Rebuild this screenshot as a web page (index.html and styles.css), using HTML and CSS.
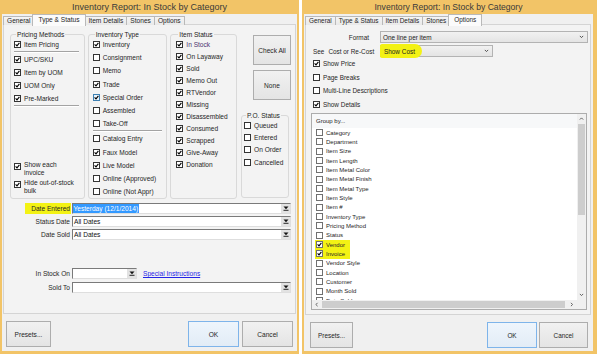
FILE: index.html
```html
<!DOCTYPE html>
<html lang="en">
<head>
<meta charset="utf-8">
<title>Inventory Report</title>
<link rel="stylesheet" href="styles.css">
</head>
<body>
<div class="screen">
  <section class="win win-left">
    <div class="titlebar">Inventory Report: In Stock by Category</div>
    <div class="client">
      <div class="tabs">
        <div class="tab">General</div>
        <div class="tab sel">Type &amp; Status</div>
        <div class="tab">Item Details</div>
        <div class="tab">Stones</div>
        <div class="tab">Options</div>
      </div>
      <div class="panel panel-left">
        <div class="groups">
          <fieldset class="grp grp-pricing">
            <legend>Pricing Methods</legend>
            <div class="grp-body pricing-body">
              <div class="chk"><span class="cb"><svg viewBox="0 0 5 5"><path d="M.6 2.4 2 3.9 4.4.8"/></svg></span>Item Pricing</div>
              <div class="sep"></div>
              <div class="chk"><span class="cb"><svg viewBox="0 0 5 5"><path d="M.6 2.4 2 3.9 4.4.8"/></svg></span>UPC/SKU</div>
              <div class="chk"><span class="cb"><svg viewBox="0 0 5 5"><path d="M.6 2.4 2 3.9 4.4.8"/></svg></span>Item by UOM</div>
              <div class="chk"><span class="cb"><svg viewBox="0 0 5 5"><path d="M.6 2.4 2 3.9 4.4.8"/></svg></span>UOM Only</div>
              <div class="chk"><span class="cb"><svg viewBox="0 0 5 5"><path d="M.6 2.4 2 3.9 4.4.8"/></svg></span>Pre-Marked</div>
              <div class="sep"></div>
              <div class="chk multi push"><span class="cb"><svg viewBox="0 0 5 5"><path d="M.6 2.4 2 3.9 4.4.8"/></svg></span><span>Show each<br>invoice</span></div>
              <div class="chk multi"><span class="cb"><svg viewBox="0 0 5 5"><path d="M.6 2.4 2 3.9 4.4.8"/></svg></span><span>Hide out-of-stock<br>bulk</span></div>
            </div>
          </fieldset>
          <fieldset class="grp grp-inv">
            <legend>Inventory Type</legend>
            <div class="grp-body">
              <div class="chk"><span class="cb"><svg viewBox="0 0 5 5"><path d="M.6 2.4 2 3.9 4.4.8"/></svg></span>Inventory</div>
              <div class="chk"><span class="cb"></span>Consignment</div>
              <div class="chk"><span class="cb"></span>Memo</div>
              <div class="chk"><span class="cb"><svg viewBox="0 0 5 5"><path d="M.6 2.4 2 3.9 4.4.8"/></svg></span>Trade</div>
              <div class="chk"><span class="cb hover"><svg viewBox="0 0 5 5"><path d="M.6 2.4 2 3.9 4.4.8"/></svg></span>Special Order</div>
              <div class="chk"><span class="cb"></span>Assembled</div>
              <div class="chk"><span class="cb"></span>Take-Off</div>
              <div class="sep sep-inv"></div>
              <div class="chk"><span class="cb"></span>Catalog Entry</div>
              <div class="chk"><span class="cb"><svg viewBox="0 0 5 5"><path d="M.6 2.4 2 3.9 4.4.8"/></svg></span>Faux Model</div>
              <div class="chk"><span class="cb"><svg viewBox="0 0 5 5"><path d="M.6 2.4 2 3.9 4.4.8"/></svg></span>Live Model</div>
              <div class="chk"><span class="cb"></span>Online (Approved)</div>
              <div class="chk"><span class="cb"></span>Online (Not Appr)</div>
            </div>
          </fieldset>
          <fieldset class="grp grp-status">
            <legend>Item Status</legend>
            <div class="grp-body">
              <div class="chk"><span class="cb"><svg viewBox="0 0 5 5"><path d="M.6 2.4 2 3.9 4.4.8"/></svg></span><span class="hot">In Stock</span></div>
              <div class="chk"><span class="cb"><svg viewBox="0 0 5 5"><path d="M.6 2.4 2 3.9 4.4.8"/></svg></span>On Layaway</div>
              <div class="chk"><span class="cb"><svg viewBox="0 0 5 5"><path d="M.6 2.4 2 3.9 4.4.8"/></svg></span>Sold</div>
              <div class="chk"><span class="cb"><svg viewBox="0 0 5 5"><path d="M.6 2.4 2 3.9 4.4.8"/></svg></span>Memo Out</div>
              <div class="chk"><span class="cb"><svg viewBox="0 0 5 5"><path d="M.6 2.4 2 3.9 4.4.8"/></svg></span>RTVendor</div>
              <div class="chk"><span class="cb"><svg viewBox="0 0 5 5"><path d="M.6 2.4 2 3.9 4.4.8"/></svg></span>Missing</div>
              <div class="chk"><span class="cb"><svg viewBox="0 0 5 5"><path d="M.6 2.4 2 3.9 4.4.8"/></svg></span>Disassembled</div>
              <div class="chk"><span class="cb"><svg viewBox="0 0 5 5"><path d="M.6 2.4 2 3.9 4.4.8"/></svg></span>Consumed</div>
              <div class="chk"><span class="cb"><svg viewBox="0 0 5 5"><path d="M.6 2.4 2 3.9 4.4.8"/></svg></span>Scrapped</div>
              <div class="chk"><span class="cb"><svg viewBox="0 0 5 5"><path d="M.6 2.4 2 3.9 4.4.8"/></svg></span>Give-Away</div>
              <div class="chk"><span class="cb"><svg viewBox="0 0 5 5"><path d="M.6 2.4 2 3.9 4.4.8"/></svg></span>Donation</div>
            </div>
          </fieldset>
          <div class="rightcol">
            <div class="btn side-btn">Check All</div>
            <div class="btn side-btn none-btn">None</div>
            <fieldset class="grp grp-po">
              <legend>P.O. Status</legend>
              <div class="grp-body">
                <div class="chk"><span class="cb"></span>Queued</div>
                <div class="chk"><span class="cb"></span>Entered</div>
                <div class="chk"><span class="cb"></span>On Order</div>
                <div class="chk"><span class="cb"></span>Cancelled</div>
              </div>
            </fieldset>
          </div>
        </div>
        <div class="form">
          <div class="frow"><span class="flabel"><span class="hl">Date Entered</span></span><div class="field"><span class="seltext">Yesterday (12/1/2014)</span><span class="dd"><svg viewBox="0 0 6 5"><path d="M.5 .5h5L3 3.2z"/><path d="M.5 4.3h5" class="ul"/></svg></span></div></div>
          <div class="frow"><span class="flabel">Status Date</span><div class="field"><span class="val">All Dates</span><span class="dd"><svg viewBox="0 0 6 5"><path d="M.5 .5h5L3 3.2z"/><path d="M.5 4.3h5" class="ul"/></svg></span></div></div>
          <div class="frow"><span class="flabel">Date Sold</span><div class="field"><span class="val">All Dates</span><span class="dd"><svg viewBox="0 0 6 5"><path d="M.5 .5h5L3 3.2z"/><path d="M.5 4.3h5" class="ul"/></svg></span></div></div>
          <div class="frow frow-gap"><span class="flabel">In Stock On</span><div class="field field-short"><span class="dd"><svg viewBox="0 0 6 5"><path d="M.5 .5h5L3 3.2z"/><path d="M.5 4.3h5" class="ul"/></svg></span></div><span class="link">Special Instructions</span></div>
          <div class="frow"><span class="flabel">Sold To</span><div class="field"><span class="dd"><svg viewBox="0 0 6 5"><path d="M.5 .5h5L3 3.2z"/><path d="M.5 4.3h5" class="ul"/></svg></span></div></div>
        </div>
      </div>
      <div class="bottombar">
        <div class="btn b-presets">Presets...</div>
        <div class="btn b-ok">OK</div>
        <div class="btn b-cancel">Cancel</div>
      </div>
    </div>
  </section>

  <section class="win win-right">
    <div class="titlebar">Inventory Report: In Stock by Category</div>
    <div class="client">
      <div class="tabs">
        <div class="tab">General</div>
        <div class="tab">Type &amp; Status</div>
        <div class="tab">Item Details</div>
        <div class="tab">Stones</div>
        <div class="tab sel">Options</div>
      </div>
      <div class="panel panel-right">
        <div class="orow"><span class="olabel olabel-r">Format</span><div class="wcombo wcombo-wide"><span>One line per item</span><svg viewBox="0 0 6 4"><path d="M1 1 3 3 5 1"/></svg></div></div>
        <div class="orow"><span class="olabel olabel-l"><span>See</span><span class="see-gap">Cost or Re-Cost</span></span><div class="wcombo wcombo-narrow"><span class="hlcost">Show Cost</span><svg viewBox="0 0 6 4"><path d="M1 1 3 3 5 1"/></svg></div></div>
        <div class="ochecks">
          <div class="chk"><span class="cb"><svg viewBox="0 0 5 5"><path d="M.6 2.4 2 3.9 4.4.8"/></svg></span>Show Price</div>
          <div class="chk"><span class="cb"></span>Page Breaks</div>
          <div class="chk"><span class="cb"></span>Multi-Line Descriptions</div>
          <div class="chk"><span class="cb"><svg viewBox="0 0 5 5"><path d="M.6 2.4 2 3.9 4.4.8"/></svg></span>Show Details</div>
        </div>
        <div class="listbox">
          <div class="lb-main">
            <div class="lb-content">
              <div class="lb-head">Group by...</div>
              <div class="lb-item"><span class="cb"></span>Category</div>
              <div class="lb-item"><span class="cb"></span>Department</div>
              <div class="lb-item"><span class="cb"></span>Item Size</div>
              <div class="lb-item"><span class="cb"></span>Item Length</div>
              <div class="lb-item"><span class="cb"></span>Item Metal Color</div>
              <div class="lb-item"><span class="cb"></span>Item Metal Finish</div>
              <div class="lb-item"><span class="cb"></span>Item Metal Type</div>
              <div class="lb-item"><span class="cb"></span>Item Style</div>
              <div class="lb-item"><span class="cb"></span>Item #</div>
              <div class="lb-item"><span class="cb"></span>Inventory Type</div>
              <div class="lb-item"><span class="cb"></span>Pricing Method</div>
              <div class="lb-item"><span class="cb"></span>Status</div>
              <div class="lb-item"><span class="mark"><span class="cb"><svg viewBox="0 0 5 5"><path d="M.6 2.4 2 3.9 4.4.8"/></svg></span>Vendor</span></div>
              <div class="lb-item"><span class="mark"><span class="cb"><svg viewBox="0 0 5 5"><path d="M.6 2.4 2 3.9 4.4.8"/></svg></span>Invoice</span></div>
              <div class="lb-item"><span class="cb"></span>Vendor Style</div>
              <div class="lb-item"><span class="cb"></span>Location</div>
              <div class="lb-item"><span class="cb"></span>Customer</div>
              <div class="lb-item"><span class="cb"></span>Month Sold</div>
              <div class="lb-item"><span class="cb"></span>Date Sold</div>
            </div>
            <div class="vscroll">
              <div class="sb-btn"><svg viewBox="0 0 6 4"><path d="M1 3 3 1 5 3"/></svg></div>
              <div class="vthumb"></div>
              <div class="sb-track"></div>
              <div class="sb-btn"><svg viewBox="0 0 6 4"><path d="M1 1 3 3 5 1"/></svg></div>
            </div>
          </div>
          <div class="hscroll">
            <div class="sb-btn sb-h"><svg viewBox="0 0 4 6"><path d="M3 1 1 3 3 5"/></svg></div>
            <div class="hthumb"></div>
            <div class="sb-track"></div>
            <div class="sb-btn sb-h sb-hr"><svg viewBox="0 0 4 6"><path d="M1 1 3 3 1 5"/></svg></div>
            <div class="sb-corner"></div>
          </div>
        </div>
      </div>
      <div class="bottombar bottombar-right">
        <div class="btn b-presets">Presets...</div>
        <div class="btn b-ok">OK</div>
        <div class="btn b-cancel">Cancel</div>
      </div>
    </div>
  </section>
</div>
</body>
</html>
```

FILE: styles.css
```css
* { box-sizing: border-box; }
html, body { margin: 0; padding: 0; }
body {
  background: #ffffff;
  width: 597px;
  height: 356px;
  overflow: hidden;
  font-family: "Liberation Sans", Arial, sans-serif;
  color: #222;
}
.screen { display: flex; gap: 3px; }

.win {
  background: #f2c467;
  height: 354px;
  display: flex;
  flex-direction: column;
}
.win-left { width: 299px; padding: 0 2px 3px 2px; font-size: 6.6px; }
.win-right { width: 295px; padding: 0 4px 3px 2px; font-size: 6.4px; }

.titlebar {
  height: 14px;
  line-height: 15px;
  text-align: center;
  font-size: 9px;
  color: #3a3a3a;
  white-space: nowrap;
}
.win-right .titlebar { font-size: 8.6px; }

.client {
  flex: 1;
  background: #f0f0f0;
  display: flex;
  flex-direction: column;
  padding: 0 1px;
}
.win-right .client { padding: 0 2px 0 1px; }

/* tabs */
.tabs {
  display: flex;
  align-items: flex-end;
  height: 11px;
  position: relative;
  z-index: 1;
}
.tab {
  height: 9px;
  line-height: 8px;
  padding: 0 3px;
  border: 1px solid #b9b9b9;
  border-bottom: 0;
  background: linear-gradient(#f4f4f4, #e9e9e9);
  margin-right: -1px;
  white-space: nowrap;
  color: #262626;
}
.tab.sel {
  height: 12px;
  line-height: 10px;
  background: #fbfbfb;
  margin: 0 -1px -1px -1px;
  padding: 0 5px;
  position: relative;
}

/* panels */
.panel {
  margin-top: -1px;
  border: 1px solid #d4d4d4;
  background: #f3f3f3;
}
.panel-left { height: 290px; padding: 6px 4px 0 6px; }
.panel-right { height: 291px; padding: 6px 1px 0 0; }

/* group boxes */
.groups { display: flex; align-items: flex-start; height: 168px; }
.grp {
  margin: 0;
  padding: 0;
  border: 1px solid #d9d9d9;
  border-radius: 3px;
  min-width: 0;
  height: 168px;
}
.grp legend {
  line-height: 7px;
  padding: 0 1px;
  margin-left: 2px;
  color: #222;
}
.grp-body { display: flex; flex-direction: column; }
.grp-pricing { width: 75px; padding: 0 3px; }
.pricing-body { height: 160px; padding-bottom: 3px; }
.grp-inv { width: 80px; margin-left: 3px; padding-left: 4px; }
.grp-status { width: 67px; margin-left: 3px; padding-left: 5px; }
.grp-inv .chk { height: 13.2px; }
.grp-status .chk { height: 12.1px; }

.rightcol { width: 50px; margin-left: 4px; display: flex; flex-direction: column; }
.side-btn { width: 38px; height: 30px; margin: 4px 0 0 12px; }
.none-btn { margin-top: 5px; }
.grp-po { width: 48px; height: 86px; margin-top: 12px; padding-left: 2px; }
.grp-po .chk { height: 12.3px; }

/* checkbox rows */
.chk {
  display: flex;
  align-items: center;
  height: 13px;
  white-space: nowrap;
  color: #262626;
}
.cb {
  flex: none;
  width: 7px;
  height: 7px;
  border: 1px solid #333;
  background: #fff;
  margin-right: 3px;
  display: flex;
  align-items: center;
  justify-content: center;
}
.cb svg {
  display: block;
  width: 5px;
  height: 5px;
  fill: none;
  stroke: #000;
  stroke-width: 1.1;
}
.cb.hover { border-color: #3c7fb1; background: #eaf4fc; }
.hot { color: #4d3470; }
.chk.multi { height: auto; align-items: flex-start; line-height: 8px; }
.chk.multi .cb { margin-top: 2px; }
.chk.multi + .chk.multi { margin-top: 2px; }
.push { margin-top: auto; }

.sep {
  height: 2px;
  border-top: 1px solid #a3a3a3;
  border-bottom: 1px solid #ffffff;
  margin-right: 2px;
}
.sep-inv { margin-right: 4px; }

/* form rows */
.form { margin-top: 4px; }
.frow {
  display: flex;
  align-items: center;
  height: 11px;
  margin-bottom: 2px;
  white-space: nowrap;
}
.frow-gap { margin-top: 28px; margin-bottom: 3px; }
.flabel {
  width: 60px;
  flex: none;
  text-align: right;
  color: #262626;
}
.hl {
  display: inline-block;
  background: #f3f214;
  height: 11px;
  line-height: 11px;
  padding: 0 1px 0 6px;
  margin-right: -1px;
}
.field {
  margin-left: 2px;
  width: 220px;
  height: 11px;
  background: #fff;
  border: 1px solid;
  border-color: #7a7a7a #dedede #dedede #7a7a7a;
  display: flex;
  align-items: center;
}
.field-short { width: 65px; }
.val { padding-left: 1px; color: #111; }
.seltext {
  background: #3399ff;
  color: #fff;
  height: 9px;
  line-height: 9px;
  padding: 0 0.5px;
}
.dd {
  margin-left: auto;
  width: 9px;
  height: 9px;
  background: #e2e2e2;
  display: flex;
  align-items: center;
  justify-content: center;
}
.dd svg { width: 6px; height: 5px; fill: #111; }
.dd svg .ul { stroke: #111; stroke-width: 0.9; fill: none; }
.link { margin-left: 6px; color: #2424e6; text-decoration: underline; }

/* buttons */
.btn {
  border: 1px solid #adadad;
  background: linear-gradient(#f1f1f1, #e4e4e4);
  display: flex;
  align-items: center;
  justify-content: center;
  color: #262626;
  white-space: nowrap;
}
.bottombar { flex: 1; display: flex; align-items: flex-start; padding: 7px 3px 0 3px; }
.b-presets { width: 45px; height: 26px; }
.b-ok {
  width: 51px;
  height: 26px;
  margin-left: auto;
  border-color: #7eb4ea;
  background: linear-gradient(#eef5fc, #e2ecf6);
}
.b-cancel { width: 51px; height: 26px; margin-left: 3px; }
.bottombar-right { padding: 7px 3px 0 5px; }
.bottombar-right .b-presets { width: 43px; }
.bottombar-right .b-ok { width: 50px; }
.bottombar-right .b-cancel { width: 49px; margin-left: 2px; }

/* options tab */
.orow { display: flex; align-items: center; height: 12px; white-space: nowrap; }
.orow + .orow { margin-top: 2px; }
.olabel { width: 74px; flex: none; color: #262626; }
.olabel-r { text-align: right; padding-right: 11px; }
.olabel-l { padding-left: 7px; }
.see-gap { margin-left: 4px; }
.wcombo {
  height: 12px;
  border: 1px solid #b3b3b3;
  background: linear-gradient(#f1f1f1, #e4e4e4);
  display: flex;
  align-items: center;
  padding-left: 2px;
  color: #222;
}
.wcombo-wide { width: 208px; }
.wcombo-narrow { width: 113px; }
.wcombo svg {
  margin-left: auto;
  margin-right: 3px;
  width: 5px;
  height: 3.5px;
  fill: none;
  stroke: #444;
  stroke-width: 1.1;
}
.hlcost {
  display: flex;
  align-items: center;
  height: 14px;
  margin: -1px 0 -1px -3px;
  padding: 0 7px 0 4px;
  background: #f3f214;
  border-radius: 2px 7px 7px 2px;
}
.ochecks .chk { height: 13.5px; padding-left: 7px; }

/* listbox */
.listbox {
  margin: 2px 0 0 5px;
  width: 276px;
  height: 197px;
  border: 1px solid #acacac;
  background: #fff;
  display: flex;
  flex-direction: column;
}
.lb-main { flex: 1; display: flex; min-height: 0; }
.lb-content { flex: 1; overflow: hidden; font-size: 6px; }
.lb-head {
  height: 14px;
  line-height: 14px;
  padding-left: 4px;
  background: #f7f8f9;
  color: #222;
}
.lb-item {
  height: 9.33px;
  display: flex;
  align-items: center;
  padding-left: 4px;
  white-space: nowrap;
  color: #262626;
}
.lb-item .cb { border-color: #707070; height: 7px; }
.mark {
  display: flex;
  align-items: center;
  height: 9.5px;
  margin-left: -1px;
  padding: 0 5px 0 1px;
  background: #f3f214;
}
.vscroll { width: 9px; background: #f0f0f0; display: flex; flex-direction: column; }
.sb-btn {
  flex: none;
  height: 10px;
  display: flex;
  align-items: center;
  justify-content: center;
}
.sb-btn svg { width: 5px; height: 3.5px; fill: none; stroke: #555; stroke-width: 1.1; }
.vthumb { height: 91px; background: #cdcdcd; margin: 0 1px; flex: none; }
.sb-track { flex: 1; }
.hscroll { height: 9px; display: flex; background: #f0f0f0; flex: none; }
.sb-h { width: 10px; height: 9px; }
.sb-h svg { width: 3.5px; height: 5px; }
.sb-hr { width: 11px; }
.hthumb { width: 243px; background: #cdcdcd; margin: 1px 0; flex: none; }
.sb-corner { width: 9px; background: #f0f0f0; }
```
